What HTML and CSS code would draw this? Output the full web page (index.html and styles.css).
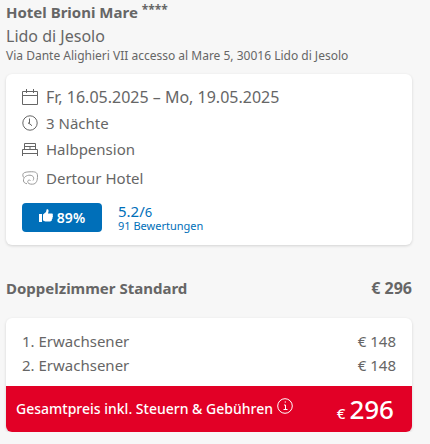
FILE: index.html
```html
<!DOCTYPE html>
<html lang="de">
<head>
    <meta charset="UTF-8">
    <meta name="viewport" content="width=device-width, initial-scale=1.0">
    <title>Hotel Brioni Mare</title>
    <link rel="stylesheet" href="styles.css">
</head>
<body>
    <main class="booking">
        <header class="hotel">
            <h1 class="hotel-name">Hotel Brioni Mare <sup class="stars">****</sup></h1>
            <p class="hotel-place">Lido di Jesolo</p>
            <p class="hotel-address">Via Dante Alighieri VII accesso al Mare 5, 30016 Lido di Jesolo</p>
        </header>

        <section class="card details">
            <ul class="facts">
                <li class="dates">
                    <svg class="icon" viewBox="0 0 16 16"><path d="M.5 2.5h15v13H.5zM.5 6.5h15M4.5 0v4M11.5 0v4"/></svg>
                    Fr, 16.05.2025 – Mo, 19.05.2025
                </li>
                <li>
                    <svg class="icon" viewBox="0 0 16 16"><circle cx="8" cy="8" r="7.2"/><path d="M7.5 3.5v5l2.5 2.3M7.5 6.5l-1 2 1 .5"/></svg>
                    3 Nächte
                </li>
                <li>
                    <svg class="icon" viewBox="0 0 16 16"><path d="M2.5 8.5v-6h11v6M2.5 5.500h11M8 5.500v3M.5 8.500h15M.5 8.500V15M15.500 8.500V15M.5 12.500h15"/></svg>
                    Halbpension
                </li>
                <li class="brand">
                    <svg class="icon wave" viewBox="0 0 16 16"><path d="M1.500 7.500C-.5 3 2 2 8 1.800c5-.2 7.500.2 7.500 4.200 0 4.500-1 8-5 8.200-3 .2-5-1-4.800-2.700.1-1.500 1.800-1.800 2.800-1M1.500 11C1 7.500 4.500 5 8 5.200c3.500.2 4.500 3 3 5.300M1.500 11c.3 1.500 1.500 2.500 3.500 2.700"/></svg>
                    Dertour Hotel
                </li>
            </ul>
            <div class="rating">
                <span class="badge">
                    <svg class="thumb" viewBox="0 0 14 13"><path d="M0 5h3v8H0zM4 5.500L7 3l.6-2.500C8 .1 9.600 0 9.600 2c0 1-.4 1.800-.7 2.500h3.600c1.300 0 1.700 1 1.200 2 .5.700.3 1.500-.2 2 .2.800-.1 1.400-.6 1.800 0 1.500-.6 2.200-2 2.200H7.500c-1.500 0-2.500-.7-3.500-1.100z"/></svg>
                    89%
                </span>
                <div class="score">
                    <p class="score-value">5.2/<span>6</span></p>
                    <p class="score-count">91 Bewertungen</p>
                </div>
            </div>
        </section>

        <div class="room">
            <h2>Doppelzimmer Standard</h2>
            <span class="room-price">€ 296</span>
        </div>

        <section class="card prices">
            <dl class="persons">
                <div class="person"><dt>1. Erwachsener</dt><dd>€ 148</dd></div>
                <div class="person"><dt>2. Erwachsener</dt><dd>€ 148</dd></div>
            </dl>
            <div class="total">
                <span class="total-label">Gesamtpreis inkl. Steuern &amp; Gebühren
                    <svg class="info" viewBox="0 0 16 16"><circle cx="8" cy="8" r="7.3"/><path d="M7 7h1.500v4.500M6.500 11.500h4M7.700 4h1.300"/></svg>
                </span>
                <span class="total-price">€ <strong>296</strong></span>
            </div>
        </section>
    </main>
</body>
</html>
```

FILE: styles.css
```css
* {
    margin: 0;
    padding: 0;
    box-sizing: border-box;
}

body {
    font-family: "Noto Sans", sans-serif;
    font-size: 15px;
    line-height: 24px;
    color: #666;
    background: #f7f7f7;
}

.booking {
    padding: 0 18px 0 6px;
}

.hotel-name {
    font-size: 15px;
    line-height: 24px;
    font-weight: 700;
}

.stars {
    font-size: 12px;
    line-height: 12px;
    vertical-align: 4px;
}

.hotel-place {
    font-size: 16px;
}

.hotel-address {
    font-size: 12px;
    line-height: 16px;
}

.card {
    background: #fff;
    border-radius: 6px;
    box-shadow: 0 1px 3px rgba(0, 0, 0, 0.15);
    overflow: hidden;
}

.details {
    margin-top: 10px;
    padding: 10px 16px 13px;
}

.facts {
    list-style: none;
}

.facts li {
    display: flex;
    align-items: center;
    gap: 8px;
    line-height: 26px;
}

.facts .dates {
    font-size: 16px;
}

.facts .brand {
    margin-top: 3px;
}

.icon {
    width: 16px;
    height: 16px;
    fill: none;
    stroke: #666;
    stroke-width: 1;
}

.wave {
    stroke: #999;
}

.rating {
    display: flex;
    align-items: center;
    gap: 16px;
    margin-top: 12px;
}

.badge {
    display: flex;
    align-items: center;
    justify-content: center;
    gap: 4px;
    width: 80px;
    height: 29px;
    border-radius: 4px;
    background: #006fb9;
    color: #fff;
    font-size: 14px;
    font-weight: 600;
}

.thumb {
    width: 14px;
    height: 13px;
    margin-bottom: 4px;
    fill: #fff;
}

.score {
    color: #006fb9;
}

.score-value {
    line-height: 16px;
}

.score-value span {
    font-size: 13px;
}

.score-count {
    font-size: 11px;
    line-height: 12px;
}

.room {
    display: flex;
    justify-content: space-between;
    margin: 31px 0 18px;
    font-weight: 700;
}

.room h2 {
    font-size: 15px;
}

.room-price {
    font-size: 16px;
}

.persons {
    padding: 11px 16px 9px;
}

.person {
    display: flex;
    justify-content: space-between;
}

.total {
    display: flex;
    align-items: center;
    justify-content: space-between;
    padding: 5px 18px 5px 10px;
    background: #e20026;
    color: #fff;
    font-weight: 500;
}

.total-label {
    font-size: 14px;
}

.info {
    width: 16px;
    height: 16px;
    fill: none;
    stroke: #fff;
    stroke-width: 1;
}

.total-price {
    display: flex;
    align-items: baseline;
    gap: 4px;
}

.total-price strong {
    font-size: 26px;
    line-height: 36px;
    font-weight: 500;
}
```
